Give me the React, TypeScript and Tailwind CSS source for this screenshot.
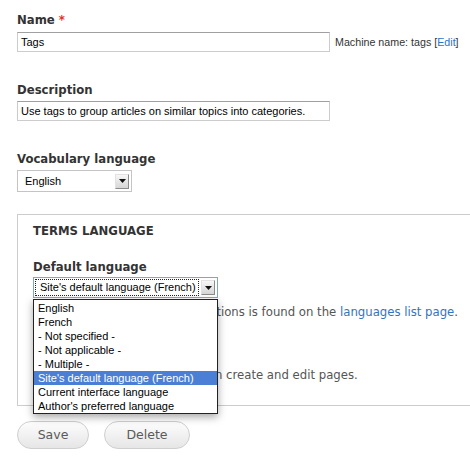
import React from "react";

const labelClass =
  "block h-4 leading-4 font-bold text-[11.7px] text-[#333]";
const sans = { fontFamily: '"Liberation Sans", Arial, sans-serif' };

const options = [
  "English",
  "French",
  "- Not specified -",
  "- Not applicable -",
  "- Multiple -",
  "Site's default language (French)",
  "Current interface language",
  "Author's preferred language",
];

const SelectArrow = () => (
  <div className="flex h-[15px] w-[14px] items-center justify-center border border-t-[#e2e2e2] border-l-[#e2e2e2] border-r-[#8c8c8c] border-b-[#8c8c8c] bg-gradient-to-b from-[#f7f7f7] to-[#d6d6d6]">
    <svg width="7" height="4" viewBox="0 0 7 4">
      <path d="M0 0 H7 L3.5 4 Z" fill="#111" />
    </svg>
  </div>
);

const App = () => {
  return (
    <div
      className="h-[460px] w-[470px] overflow-hidden bg-white pl-[17px] pt-[12px]"
      style={{ fontFamily: '"DejaVu Sans", Verdana, sans-serif' }}
    >
      {/* Name */}
      <div>
        <label className={labelClass}>
          Name <span className="text-[#e0322c]">*</span>
        </label>
        <div className="mt-1 flex items-center">
          <div
            className="flex h-[20px] w-[313px] items-center border border-[#cccccc] border-t-[#a0a0a0] px-[3px] text-[11px] text-black"
            style={sans}
          >
            Tags
          </div>
          <span className="ml-[5px] text-[10.7px] text-[#333]" style={sans}>
            Machine name: tags [<span className="text-[#2e72c2]">Edit</span>]
          </span>
        </div>
      </div>

      {/* Description */}
      <div className="mt-[30px]">
        <label className={labelClass}>Description</label>
        <div
          className="mt-[3px] flex h-[20px] w-[313px] items-center border border-[#cccccc] border-t-[#a0a0a0] px-[3px] text-[11px] text-black"
          style={sans}
        >
          Use tags to group articles on similar topics into categories.
        </div>
      </div>

      {/* Vocabulary language */}
      <div className="mt-[30px]">
        <label className={labelClass}>Vocabulary language</label>
        <div
          className="mt-[3px] flex h-[22px] w-[115px] items-center justify-between border border-[#c4c4c4] pl-[7px] pr-[2px] text-[11px] text-black"
          style={sans}
        >
          <span>English</span>
          <SelectArrow />
        </div>
      </div>

      {/* Terms language fieldset */}
      <div className="mt-[22px] w-[480px] border border-[#cccccc] pb-[22px] pl-[15px] pt-[8px]">
        <div className="h-4 font-bold text-[11.7px] leading-4 text-[#333]">
          TERMS LANGUAGE
        </div>

        <div className="mt-[20px]">
          <label className={labelClass}>Default language</label>
          <div className="relative mt-[2px] w-[185px]">
            <div
              className="flex h-[21px] w-[185px] items-center border border-[#7ba6dc] pl-[1px] pr-[2px] text-[11px] text-black"
              style={sans}
            >
              <div className="flex h-[17px] w-[164px] items-center border border-dotted border-[#222] pl-[4px]">
                Site's default language (French)
              </div>
              <div className="ml-auto">
                <SelectArrow />
              </div>
            </div>

            {/* open dropdown list */}
            <div
              className="absolute left-0 top-[22px] z-10 w-[185px] border border-[#222] bg-white pt-[1px] shadow-[0_3px_8px_rgba(0,0,0,0.35)]"
              style={sans}
            >
              {options.map((option, i) => (
                <div
                  key={option}
                  className={
                    i === 5
                      ? "flex h-[14px] items-center bg-[#4a7fd5] pl-[4px] text-[11px] text-white"
                      : "flex h-[14px] items-center pl-[4px] text-[11px] text-black"
                  }
                >
                  {option}
                </div>
              ))}
            </div>
          </div>
          <div className="mt-[6px] h-4 text-[11.7px] leading-4 text-[#555]">
            Explanation of the language options is found on the{" "}
            <span className="text-[#3473bf]">languages list page</span>.
          </div>
        </div>

        <div className="mt-[20px] flex h-4 items-center gap-[6px] text-[11.5px] text-[#333]">
          <span className="h-[13px] w-[13px] border border-[#999] bg-white" />
          Show language selector
        </div>
        <div className="ml-[31px] mt-[11px] h-4 text-[11.7px] leading-4 text-[#555]">
          Show language selector on create and edit pages.
        </div>
      </div>

      {/* Actions */}
      <div className="mt-[15px] flex gap-[15px]">
        <button className="h-[28px] w-[72px] rounded-full border border-[#cfcfcf] bg-gradient-to-b from-[#fdfdfd] to-[#e6e6e6] text-[12.5px] text-[#5a5a5a]">
          Save
        </button>
        <button className="h-[28px] w-[86px] rounded-full border border-[#cfcfcf] bg-gradient-to-b from-[#fdfdfd] to-[#e6e6e6] text-[12.5px] text-[#5a5a5a]">
          Delete
        </button>
      </div>
    </div>
  );
};

export default App;
